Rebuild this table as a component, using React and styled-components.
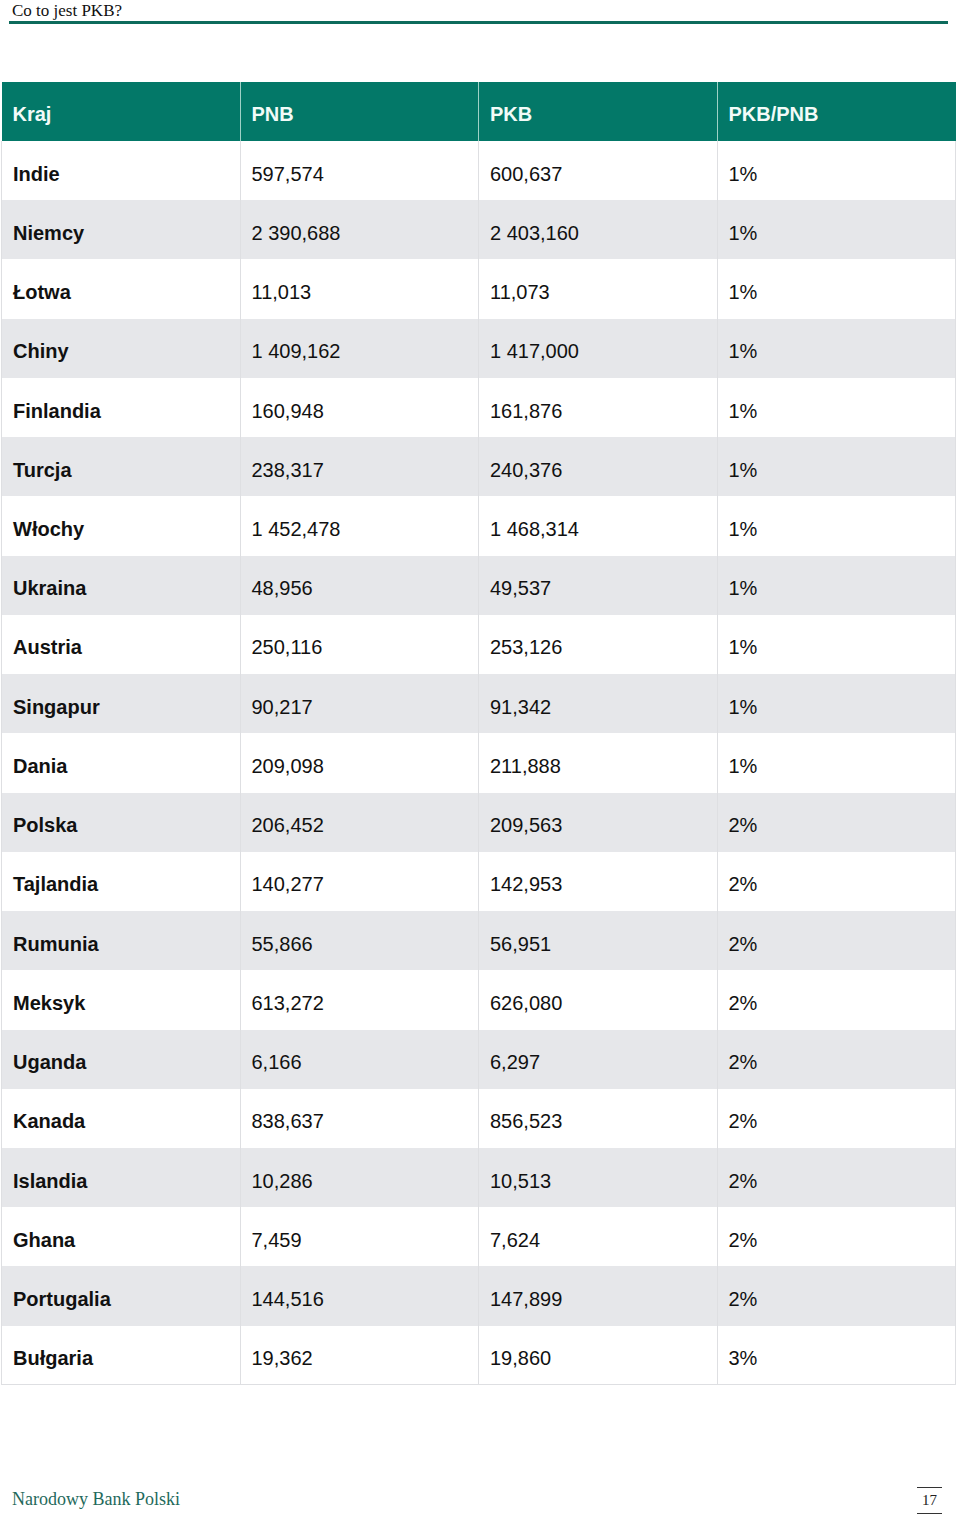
import React from "react";
import styled, { createGlobalStyle } from "styled-components";

const Global = createGlobalStyle`
  html, body { margin: 0; padding: 0; background: #fff; }
  body { width: 960px; height: 1516px; overflow: hidden; }
`;

const Page = styled.div`
  position: relative;
  width: 960px;
  height: 1516px;
  display: flex;
  flex-direction: column;
`;

const Header = styled.div`
  margin: 0 12px 0 9px;
  padding: 0 0 0 3px;
  height: 21px;
  border-bottom: 3px solid #0d6b5c;
  font-family: "Liberation Serif", "Times New Roman", serif;
  font-size: 17px;
  line-height: 21px;
  color: #111;
`;

const Table = styled.table`
  margin: 58px 0 0 1px;
  width: 955px;
  border-collapse: collapse;
  table-layout: fixed;
  font-family: "Liberation Sans", Arial, sans-serif;
  font-size: 20px;
`;

const HeadCell = styled.th`
  height: 59px;
  padding: 6px 0 0 11px;
  box-sizing: border-box;
  background: #037868;
  color: #f2fbf8;
  font-weight: bold;
  text-align: left;
  border-left: 1px solid #9fd1c6;
  &:first-child { border-left: none; }
`;

const Row = styled.tr`
  background: ${(p) => (p.$alt ? "#e6e7ea" : "#ffffff")};
`;

const Cell = styled.td`
  height: 59.24px;
  padding: 7px 0 0 11px;
  box-sizing: border-box;
  color: #111;
  font-weight: ${(p) => (p.$bold ? "bold" : "normal")};
  border: 1px solid #dedfe2;
  border-top: none;
  border-bottom: none;
  ${(p) => (p.$last ? "border-bottom: 1px solid #dedfe2;" : "")}
`;

const Footer = styled.div`
  margin-top: auto;
  display: flex;
  justify-content: space-between;
  align-items: flex-end;
  padding: 0 18px 2px 12px;
  height: 30px;
`;

const Brand = styled.div`
  font-family: "Liberation Serif", "Times New Roman", serif;
  font-size: 18px;
  color: #1f6a5c;
  line-height: 20px;
  padding-bottom: 5px;
`;

const PageNo = styled.div`
  width: 25px;
  text-align: center;
  font-family: "Liberation Serif", "Times New Roman", serif;
  font-size: 15px;
  color: #222;
  line-height: 25px;
  border-top: 1px solid #333;
  border-bottom: 1px solid #333;
`;

const rows = [
  ["Indie", "597,574", "600,637", "1%"],
  ["Niemcy", "2 390,688", "2 403,160", "1%"],
  ["Łotwa", "11,013", "11,073", "1%"],
  ["Chiny", "1 409,162", "1 417,000", "1%"],
  ["Finlandia", "160,948", "161,876", "1%"],
  ["Turcja", "238,317", "240,376", "1%"],
  ["Włochy", "1 452,478", "1 468,314", "1%"],
  ["Ukraina", "48,956", "49,537", "1%"],
  ["Austria", "250,116", "253,126", "1%"],
  ["Singapur", "90,217", "91,342", "1%"],
  ["Dania", "209,098", "211,888", "1%"],
  ["Polska", "206,452", "209,563", "2%"],
  ["Tajlandia", "140,277", "142,953", "2%"],
  ["Rumunia", "55,866", "56,951", "2%"],
  ["Meksyk", "613,272", "626,080", "2%"],
  ["Uganda", "6,166", "6,297", "2%"],
  ["Kanada", "838,637", "856,523", "2%"],
  ["Islandia", "10,286", "10,513", "2%"],
  ["Ghana", "7,459", "7,624", "2%"],
  ["Portugalia", "144,516", "147,899", "2%"],
  ["Bułgaria", "19,362", "19,860", "3%"],
];

export default function App() {
  return (
    <Page>
      <Global />
      <Header>Co to jest PKB?</Header>
      <Table>
        <thead>
          <tr>
            <HeadCell>Kraj</HeadCell>
            <HeadCell>PNB</HeadCell>
            <HeadCell>PKB</HeadCell>
            <HeadCell>PKB/PNB</HeadCell>
          </tr>
        </thead>
        <tbody>
          {rows.map((r, i) => (
            <Row key={r[0]} $alt={i % 2 === 1}>
              {r.map((v, j) => (
                <Cell key={j} $bold={j === 0} $last={i === rows.length - 1}>
                  {v}
                </Cell>
              ))}
            </Row>
          ))}
        </tbody>
      </Table>
      <Footer>
        <Brand>Narodowy Bank Polski</Brand>
        <PageNo>17</PageNo>
      </Footer>
    </Page>
  );
}
